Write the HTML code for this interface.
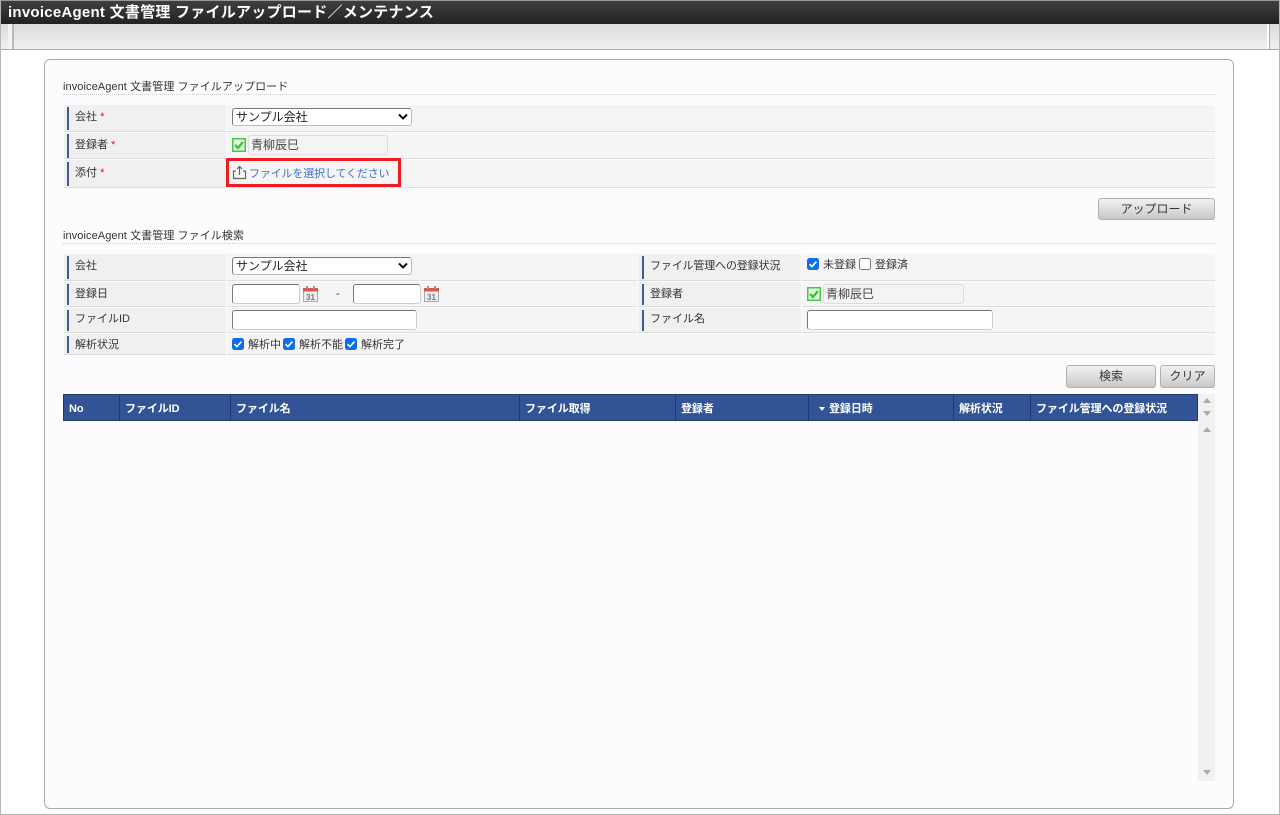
<!DOCTYPE html>
<html lang="ja"><head><meta charset="utf-8"><title>invoiceAgent</title>
<style>
html,body{margin:0;padding:0;background:#fff}
body{width:1280px;height:815px;position:relative;overflow:hidden;font-family:"Liberation Sans","Noto Sans CJK JP",sans-serif;font-size:11px;color:#333}
.a{position:absolute;box-sizing:border-box;white-space:nowrap}
.hd{left:1px;top:1px;width:1278px;height:23px;background:linear-gradient(#3f3f3f,#222);color:#fff;font-size:15px;font-weight:bold;line-height:23px;padding-left:7px;letter-spacing:.25px}
.tb{left:1px;top:24px;width:1278px;height:26px;background:linear-gradient(#dcdcdc,#f1f1f1);border-bottom:1px solid #aaa}
.panel{left:44px;top:59px;width:1190px;height:750px;background:#fcfcfe;border:1px solid #aaa;border-radius:6px}
.sec{left:63px;width:1152px;height:17px;font-size:11px;line-height:18px;border-bottom:1px dotted #ccc;color:#333;letter-spacing:.08px}
.l{background:#f0f0f0;border-bottom:1px solid #ddd}
.r{background:#f5f5f5;border-bottom:1px solid #ddd}
.bar{width:2px;background:#3f5a95}
.t{font-size:11px;line-height:18px;color:#333}
.st{color:#e0103a}
.sel{height:18px;background:#fff;border:1px solid #777;border-right-color:#bbb;border-bottom-color:#bbb;border-radius:3px;font-size:12px;line-height:17px;padding-left:3px;color:#222}
.sel svg{position:absolute;right:2px;top:4px}
.in{background:#fff;border:1px solid #777;border-right-color:#ccc;border-bottom-color:#ccc;border-radius:3px}
.ro{height:20px;background:#f4f4f4;border:1px solid #ddd;border-radius:3px;font-size:12px;line-height:18px;padding-left:2px;color:#444}
.ok{width:14px;height:14px}
.btn{background:linear-gradient(#f2f2f2,#c9c9c9);border:1px solid #b0b0b0;border-radius:3px;font-size:12px;line-height:20px;text-align:center;color:#333}
.cb{width:12px;height:12px;border-radius:2.5px;background:#0b6ff0}
.cb0{width:12px;height:12px;border-radius:2.5px;background:#fff;border:1px solid #777}
.th{top:394px;height:27px;background:#325497;border:solid #1f3a72;border-width:1px 0 1px 0;color:#fff;font-weight:bold;font-size:11px;line-height:28px;padding-left:5px;letter-spacing:-.08px}
.sep{border-left:1px solid #1f3a72}
.ar{width:0;height:0;border-left:4px solid transparent;border-right:4px solid transparent}
</style></head><body>
<div class="a" style="left:0;top:0;width:1280px;height:815px;border:1px solid #b5b5b5;border-top-color:#999"></div>
<div class="a hd">invoiceAgent 文書管理 ファイルアップロード／メンテナンス</div>
<div class="a tb"></div>
<div class="a" style="left:8px;top:24px;width:4px;height:25px;background:#f4f4f4"></div>
<div class="a" style="left:12px;top:24px;width:2px;height:25px;background:#bbb"></div>
<div class="a" style="left:1267px;top:24px;width:2px;height:25px;background:#fff"></div>
<div class="a" style="left:1269px;top:24px;width:1px;height:25px;background:#aaa"></div>
<div class="a panel"></div>

<div class="a sec" style="top:78px">invoiceAgent 文書管理 ファイルアップロード</div>

<div class="a l" style="left:64px;top:105px;width:162px;height:27px"></div><div class="a r" style="left:227px;top:105px;width:988px;height:27px"></div>
<div class="a l" style="left:64px;top:133px;width:162px;height:26px"></div><div class="a r" style="left:227px;top:133px;width:988px;height:26px"></div>
<div class="a l" style="left:64px;top:160px;width:162px;height:28px"></div><div class="a r" style="left:227px;top:160px;width:988px;height:28px"></div>
<div class="a bar" style="left:67px;top:107px;height:23px"></div>
<div class="a bar" style="left:67px;top:134px;height:24px"></div>
<div class="a bar" style="left:67px;top:162px;height:24px"></div>
<div class="a t" style="left:75px;top:108px">会社 <span class="st">*</span></div>
<div class="a t" style="left:75px;top:136px">登録者 <span class="st">*</span></div>
<div class="a t" style="left:75px;top:164px">添付 <span class="st">*</span></div>

<div class="a sel" style="left:232px;top:108px;width:180px">サンプル会社<svg width="12" height="8" viewBox="0 0 12 8"><path d="M2 1.5L6 5.5L10 1.5" fill="none" stroke="#111" stroke-width="2"/></svg></div>
<svg class="a ok" style="left:232px;top:138px" viewBox="0 0 14 14"><rect x=".75" y=".75" width="12.5" height="12.5" fill="#e4f6e4" stroke="#45c845" stroke-width="1.5"/><path d="M3 7l3 3 5-6" fill="none" stroke="#3fbf3f" stroke-width="2.4"/></svg>
<div class="a ro" style="left:248px;top:135px;width:140px">青柳辰巳</div>

<div class="a" style="left:226px;top:158px;width:175px;height:29px;border:3px solid #ee1c25"></div>
<svg class="a" style="left:232px;top:165px" width="15" height="15" viewBox="0 0 15 15"><path d="M4 6H1.5V13.5H13.5V6H11" fill="none" stroke="#666" stroke-width="1.2"/><path d="M7.5 10V1.5M5 4L7.5 1.5L10 4" fill="none" stroke="#666" stroke-width="1.2"/></svg>
<div class="a" style="left:249px;top:165px;font-size:11px;line-height:18px;color:#3f6fd0;letter-spacing:-.15px">ファイルを選択してください</div>

<div class="a btn" style="left:1098px;top:198px;width:117px;height:22px">アップロード</div>

<div class="a sec" style="top:227px">invoiceAgent 文書管理 ファイル検索</div>

<div class="a l" style="left:64px;top:254px;width:162px;height:27px"></div><div class="a r" style="left:227px;top:254px;width:410px;height:27px"></div>
<div class="a l" style="left:64px;top:282px;width:162px;height:25px"></div><div class="a r" style="left:227px;top:282px;width:410px;height:25px"></div>
<div class="a l" style="left:64px;top:308px;width:162px;height:25px"></div><div class="a r" style="left:227px;top:308px;width:410px;height:25px"></div>
<div class="a l" style="left:64px;top:334px;width:162px;height:21px"></div><div class="a r" style="left:227px;top:334px;width:988px;height:21px"></div>
<div class="a l" style="left:638px;top:254px;width:163px;height:27px"></div><div class="a r" style="left:802px;top:254px;width:413px;height:27px"></div>
<div class="a l" style="left:638px;top:282px;width:163px;height:25px"></div><div class="a r" style="left:802px;top:282px;width:413px;height:25px"></div>
<div class="a l" style="left:638px;top:308px;width:163px;height:25px"></div><div class="a r" style="left:802px;top:308px;width:413px;height:25px"></div>

<div class="a bar" style="left:67px;top:256px;height:23px"></div>
<div class="a bar" style="left:67px;top:284px;height:21px"></div>
<div class="a bar" style="left:67px;top:310px;height:21px"></div>
<div class="a bar" style="left:67px;top:336px;height:17px"></div>
<div class="a bar" style="left:642px;top:256px;height:23px"></div>
<div class="a bar" style="left:642px;top:284px;height:21px"></div>
<div class="a bar" style="left:642px;top:310px;height:21px"></div>

<div class="a t" style="left:75px;top:257px">会社</div>
<div class="a t" style="left:75px;top:285px">登録日</div>
<div class="a t" style="left:75px;top:310px">ファイルID</div>
<div class="a t" style="left:75px;top:336px">解析状況</div>
<div class="a t" style="left:650px;top:257px;letter-spacing:-.15px">ファイル管理への登録状況</div>
<div class="a t" style="left:650px;top:285px">登録者</div>
<div class="a t" style="left:650px;top:310px">ファイル名</div>

<div class="a sel" style="left:232px;top:257px;width:180px">サンプル会社<svg width="12" height="8" viewBox="0 0 12 8"><path d="M2 1.5L6 5.5L10 1.5" fill="none" stroke="#111" stroke-width="2"/></svg></div>

<div class="a in" style="left:232px;top:284px;width:68px;height:20px"></div>
<svg class="a" style="left:303px;top:286px" width="15" height="16" viewBox="0 0 15 16"><rect x=".5" y="2.5" width="14" height="13" fill="#eee" stroke="#aaa"/><rect x="0" y="2" width="15" height="3.5" fill="#e0534a"/><rect x="3" y="0" width="2" height="3" fill="#999"/><rect x="10" y="0" width="2" height="3" fill="#999"/><text x="7.5" y="14" text-anchor="middle" font-size="8" font-weight="bold" fill="#777" font-family="Liberation Sans">31</text></svg>
<div class="a t" style="left:336px;top:285px">-</div>
<div class="a in" style="left:353px;top:284px;width:68px;height:20px"></div>
<svg class="a" style="left:424px;top:286px" width="15" height="16" viewBox="0 0 15 16"><rect x=".5" y="2.5" width="14" height="13" fill="#eee" stroke="#aaa"/><rect x="0" y="2" width="15" height="3.5" fill="#e0534a"/><rect x="3" y="0" width="2" height="3" fill="#999"/><rect x="10" y="0" width="2" height="3" fill="#999"/><text x="7.5" y="14" text-anchor="middle" font-size="8" font-weight="bold" fill="#777" font-family="Liberation Sans">31</text></svg>
<div class="a in" style="left:232px;top:310px;width:185px;height:20px"></div>

<svg class="a cb" style="left:232px;top:338px" viewBox="0 0 12 12"><path d="M2.5 6.2l2.4 2.4 4.6-5" fill="none" stroke="#fff" stroke-width="1.6"/></svg>
<div class="a t" style="left:248px;top:336px">解析中</div>
<svg class="a cb" style="left:283px;top:338px" viewBox="0 0 12 12"><path d="M2.5 6.2l2.4 2.4 4.6-5" fill="none" stroke="#fff" stroke-width="1.6"/></svg>
<div class="a t" style="left:299px;top:336px">解析不能</div>
<svg class="a cb" style="left:345px;top:338px" viewBox="0 0 12 12"><path d="M2.5 6.2l2.4 2.4 4.6-5" fill="none" stroke="#fff" stroke-width="1.6"/></svg>
<div class="a t" style="left:361px;top:336px">解析完了</div>

<svg class="a cb" style="left:807px;top:258px" viewBox="0 0 12 12"><path d="M2.5 6.2l2.4 2.4 4.6-5" fill="none" stroke="#fff" stroke-width="1.6"/></svg>
<div class="a t" style="left:823px;top:256px">未登録</div>
<div class="a cb0" style="left:859px;top:258px"></div>
<div class="a t" style="left:875px;top:256px">登録済</div>

<svg class="a ok" style="left:807px;top:287px" viewBox="0 0 14 14"><rect x=".75" y=".75" width="12.5" height="12.5" fill="#e4f6e4" stroke="#45c845" stroke-width="1.5"/><path d="M3 7l3 3 5-6" fill="none" stroke="#3fbf3f" stroke-width="2.4"/></svg>
<div class="a ro" style="left:823px;top:284px;width:141px">青柳辰巳</div>
<div class="a in" style="left:807px;top:310px;width:186px;height:20px"></div>

<div class="a btn" style="left:1066px;top:365px;width:90px;height:23px">検索</div>
<div class="a btn" style="left:1160px;top:365px;width:55px;height:23px">クリア</div>

<div class="a th" style="left:63px;width:56px;border-left:1px solid #1f3a72">No</div>
<div class="a th sep" style="left:119px;width:111px">ファイルID</div>
<div class="a th sep" style="left:230px;width:289px">ファイル名</div>
<div class="a th sep" style="left:519px;width:156px">ファイル取得</div>
<div class="a th sep" style="left:675px;width:133px">登録者</div>
<div class="a th sep" style="left:808px;width:145px;padding-left:20px">登録日時</div>
<div class="a" style="left:819px;top:407px;width:0;height:0;border-left:3px solid transparent;border-right:3px solid transparent;border-top:4px solid #fff"></div>
<div class="a th sep" style="left:953px;width:77px">解析状況</div>
<div class="a th sep" style="left:1030px;width:168px;border-right:1px solid #1f3a72">ファイル管理への登録状況</div>

<div class="a" style="left:1198px;top:394px;width:17px;height:387px;background:#f1f1f1"></div>
<div class="a ar" style="left:1203px;top:398px;border-bottom:5px solid #aaa"></div>
<div class="a ar" style="left:1203px;top:411px;border-top:5px solid #aaa"></div>
<div class="a ar" style="left:1203px;top:427px;border-bottom:5px solid #aaa"></div>
<div class="a ar" style="left:1203px;top:770px;border-top:5px solid #aaa"></div>
</body></html>
